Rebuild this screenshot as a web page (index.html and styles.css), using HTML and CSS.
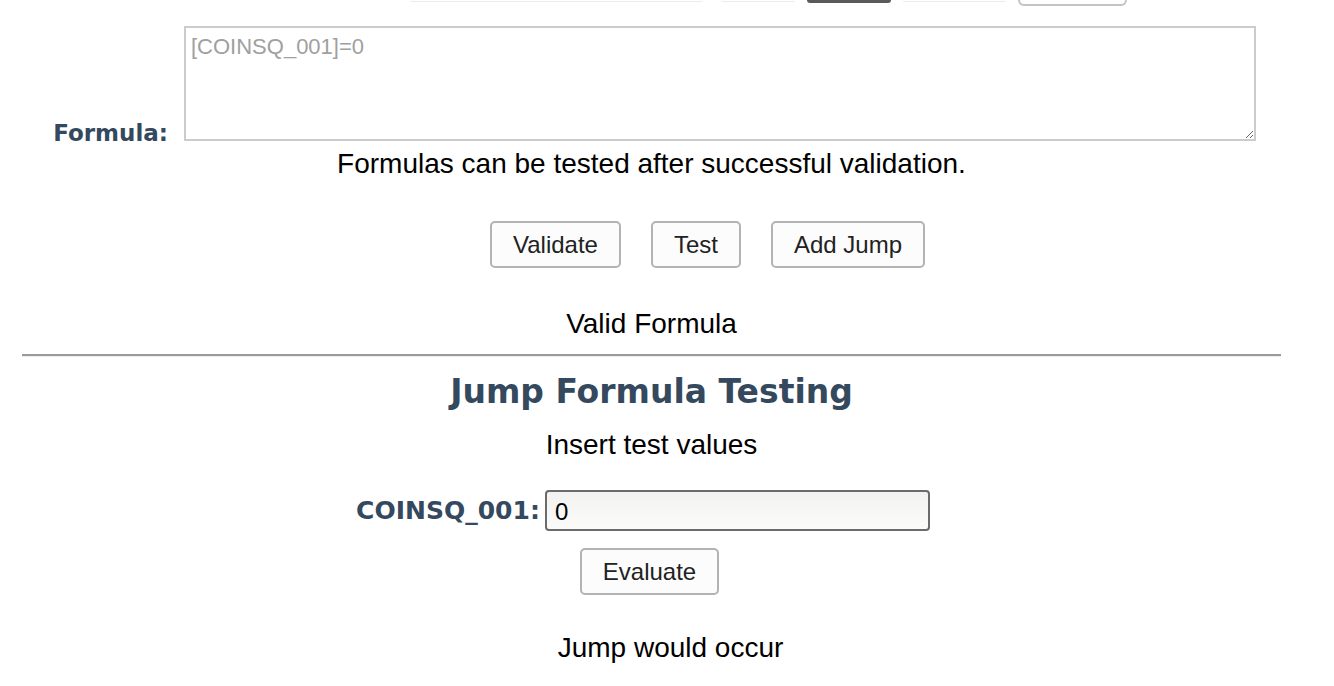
FILE: index.html
```html
<!DOCTYPE html>
<html lang="en">
<head>
  <meta charset="UTF-8">
  <meta name="viewport" content="width=device-width, initial-scale=1.0">
  <title>Jump Formula</title>
  <link rel="stylesheet" href="styles.css">
</head>
<body>

<div class="page">

  <!-- bottom edge of the toolbar that scrolled away -->
  <div class="stub-row">
    <div class="stub stub-input"></div>
    <div class="stub stub-small"></div>
    <div class="stub stub-dark"></div>
    <div class="stub stub-mid"></div>
    <div class="stub stub-btn"></div>
  </div>

  <!-- Formula editor -->
  <div class="formula-row">
    <label class="field-label" for="formula">Formula:</label>
    <textarea id="formula" placeholder="[COINSQ_001]=0"></textarea>
  </div>

  <p class="note">Formulas can be tested after successful validation.</p>

  <div class="actions">
    <button class="btn">Validate</button>
    <button class="btn">Test</button>
    <button class="btn">Add Jump</button>
  </div>

  <p class="status">Valid Formula</p>

  <hr class="divider">

  <!-- Testing section -->
  <h2 class="section-title">Jump Formula Testing</h2>
  <p class="hint">Insert test values</p>

  <div class="test-row">
    <label class="test-label" for="coinsq">COINSQ_001:</label>
    <input id="coinsq" class="test-input" type="text" value="0">
  </div>

  <div class="evaluate">
    <button class="btn">Evaluate</button>
  </div>

  <p class="result">Jump would occur</p>

</div>

</body>
</html>
```

FILE: styles.css
```css
body {
  margin: 0;
  background-color: #ffffff;
  font-family: "Liberation Sans", Arial, sans-serif;
  color: #000000;
}

.page {
  padding: 0 53px 0 22px;
}

/* toolbar leftovers at the very top */
.stub-row {
  display: flex;
  align-items: flex-start;
  height: 6px;
  padding-left: 388px;
}

.stub {
  box-sizing: border-box;
  border-radius: 0 0 4px 4px;
}

.stub-input {
  width: 293px;
  height: 2px;
  border-bottom: 1px solid #ececec;
}

.stub-small {
  width: 74px;
  height: 2px;
  margin-left: 18px;
  border-bottom: 1px solid #ececec;
}

.stub-dark {
  width: 84px;
  height: 3px;
  margin-left: 12px;
  background-color: #5a5a5a;
}

.stub-mid {
  width: 103px;
  height: 2px;
  margin-left: 12px;
  border-bottom: 1px solid #ececec;
}

.stub-btn {
  width: 109px;
  height: 6px;
  margin-left: 12px;
  border: 2px solid #c4c4c4;
  border-top: none;
  border-radius: 0 0 6px 6px;
}

/* formula */
.formula-row {
  display: flex;
  align-items: flex-end;
  margin-top: 20px;
}

.field-label {
  width: 146px;
  margin-right: 16px;
  margin-bottom: -3px;
  text-align: right;
  font-family: "DejaVu Sans", Verdana, sans-serif;
  font-weight: bold;
  font-size: 23px;
  line-height: 22px;
  color: #34495e;
}

#formula {
  box-sizing: border-box;
  width: 1072px;
  height: 115px;
  margin: 0;
  padding: 6px 5px;
  border: 2px solid #cccccc;
  font-family: "Liberation Sans", Arial, sans-serif;
  font-size: 22px;
  color: #333333;
}

#formula::placeholder {
  color: #a0a0a0;
}

.note,
.status,
.hint,
.result {
  margin: 0;
  text-align: center;
  font-size: 28px;
  line-height: 32px;
}

.note {
  margin-top: 7px;
}

.actions {
  display: flex;
  justify-content: center;
  gap: 30px;
  margin-top: 41px;
  padding-left: 112px;
}

.btn {
  box-sizing: border-box;
  height: 47px;
  padding: 0 21px;
  border: 2px solid #b3b3b3;
  border-radius: 5px;
  background-color: #fcfcfc;
  font-family: "Liberation Sans", Arial, sans-serif;
  font-size: 24px;
  color: #222222;
}

.status {
  margin-top: 40px;
}

.divider {
  margin: 14px 0 0 0;
  border: none;
  border-top: 2px solid #9a9a9a;
  border-bottom: 1px solid #ededed;
}

.section-title {
  margin: 16px 0 0 0;
  text-align: center;
  font-family: "DejaVu Sans", Verdana, sans-serif;
  font-weight: bold;
  font-size: 33px;
  line-height: 38px;
  color: #34495e;
}

.hint {
  margin-top: 18px;
}

.test-row {
  display: flex;
  justify-content: center;
  align-items: center;
  margin-top: 29px;
  padding-right: 17px;
}

.test-label {
  margin-right: 5px;
  font-family: "DejaVu Sans", Verdana, sans-serif;
  font-weight: bold;
  font-size: 25px;
  color: #34495e;
}

.test-input {
  box-sizing: border-box;
  width: 385px;
  height: 41px;
  margin: 0;
  padding: 2px 8px 0 8px;
  border: 2px solid #6b6b6b;
  border-radius: 4px;
  background: linear-gradient(to bottom, #f2f2f0, #fbfbfa);
  font-family: "Liberation Sans", Arial, sans-serif;
  font-size: 24px;
  color: #000000;
}

.evaluate {
  display: flex;
  justify-content: center;
  margin-top: 17px;
  padding-right: 4px;
}

.result {
  margin-top: 37px;
  padding-left: 38px;
}
```
